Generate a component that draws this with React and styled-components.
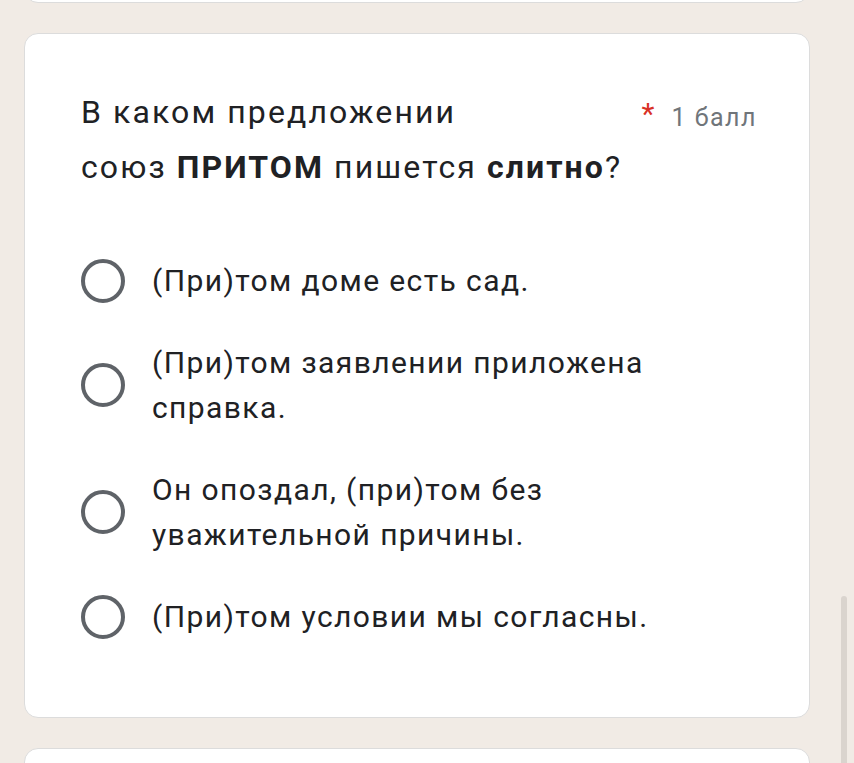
import React from "react";
import styled, { createGlobalStyle } from "styled-components";

const GlobalStyle = createGlobalStyle`
  html, body {
    margin: 0;
    padding: 0;
    background: #f1ebe5;
    overflow: hidden;
  }
  body {
    font-family: Roboto, "Noto Sans", Arial, sans-serif;
    color: #202124;
  }
`;

const Page = styled.div`
  display: flex;
  flex-direction: column;
  gap: 30px;
  padding: 0 44px 0 24px;
  margin-top: -40px;
  height: 803px;
`;

const Card = styled.div`
  background: #fff;
  border: 1.5px solid #dcdcdc;
  border-radius: 14px;
  box-sizing: border-box;
  flex-shrink: 0;
  height: ${(p) => p.h}px;
`;

const QuestionCard = styled(Card)`
  padding: 51px 56px 0 56px;
`;

const TitleRow = styled.div`
  display: flex;
  justify-content: space-between;
  align-items: flex-start;
`;

const Title = styled.div`
  font-size: 32px;
  line-height: 55px;
  letter-spacing: 2.1px;
  color: #202124;

  b {
    font-weight: 700;
  }
`;

const Points = styled.div`
  display: flex;
  align-items: flex-start;
  gap: 17px;
  padding-top: 5px;
  margin-right: -4px;
  font-size: 25px;
  line-height: 55px;
  letter-spacing: 1.5px;
  color: #70757a;
  white-space: nowrap;
`;

const Star = styled.span`
  color: #d93025;
  font-size: 30px;
  line-height: 1;
  letter-spacing: 0;
  margin-top: 9px;
`;

const Options = styled.div`
  display: flex;
  flex-direction: column;
  gap: 37px;
  margin-top: 63px;
`;

const Option = styled.label`
  display: flex;
  align-items: center;
  gap: 27px;
`;

const Radio = styled.span`
  width: 44px;
  height: 44px;
  box-sizing: border-box;
  border: 4px solid #5f6368;
  border-radius: 50%;
  flex-shrink: 0;
`;

const OptionText = styled.span`
  font-size: 30px;
  line-height: 45px;
  letter-spacing: 1.4px;
  color: #202124;
`;

const Scrollbar = styled.div`
  position: fixed;
  left: 841px;
  top: 596px;
  width: 6px;
  height: 200px;
  border-radius: 3px;
  background: #dad4ce;
`;

const options = [
  "(При)том доме есть сад.",
  "(При)том заявлении приложена справка.",
  "Он опоздал, (при)том без уважительной причины.",
  "(При)том условии мы согласны.",
];

export default function App() {
  return (
    <>
      <GlobalStyle />
      <Page>
        <Card h={43} />
        <QuestionCard h={685}>
          <TitleRow>
            <Title>
              В каком предложении
              <br />
              союз <b>ПРИТОМ</b> пишется <b>слитно</b>?
            </Title>
            <Points>
              <Star>*</Star>
              1 балл
            </Points>
          </TitleRow>
          <Options>
            {options.map((o, i) => (
              <Option key={i}>
                <Radio />
                <OptionText>{o}</OptionText>
              </Option>
            ))}
          </Options>
        </QuestionCard>
        <Card h={60} />
      </Page>
      <Scrollbar />
    </>
  );
}
